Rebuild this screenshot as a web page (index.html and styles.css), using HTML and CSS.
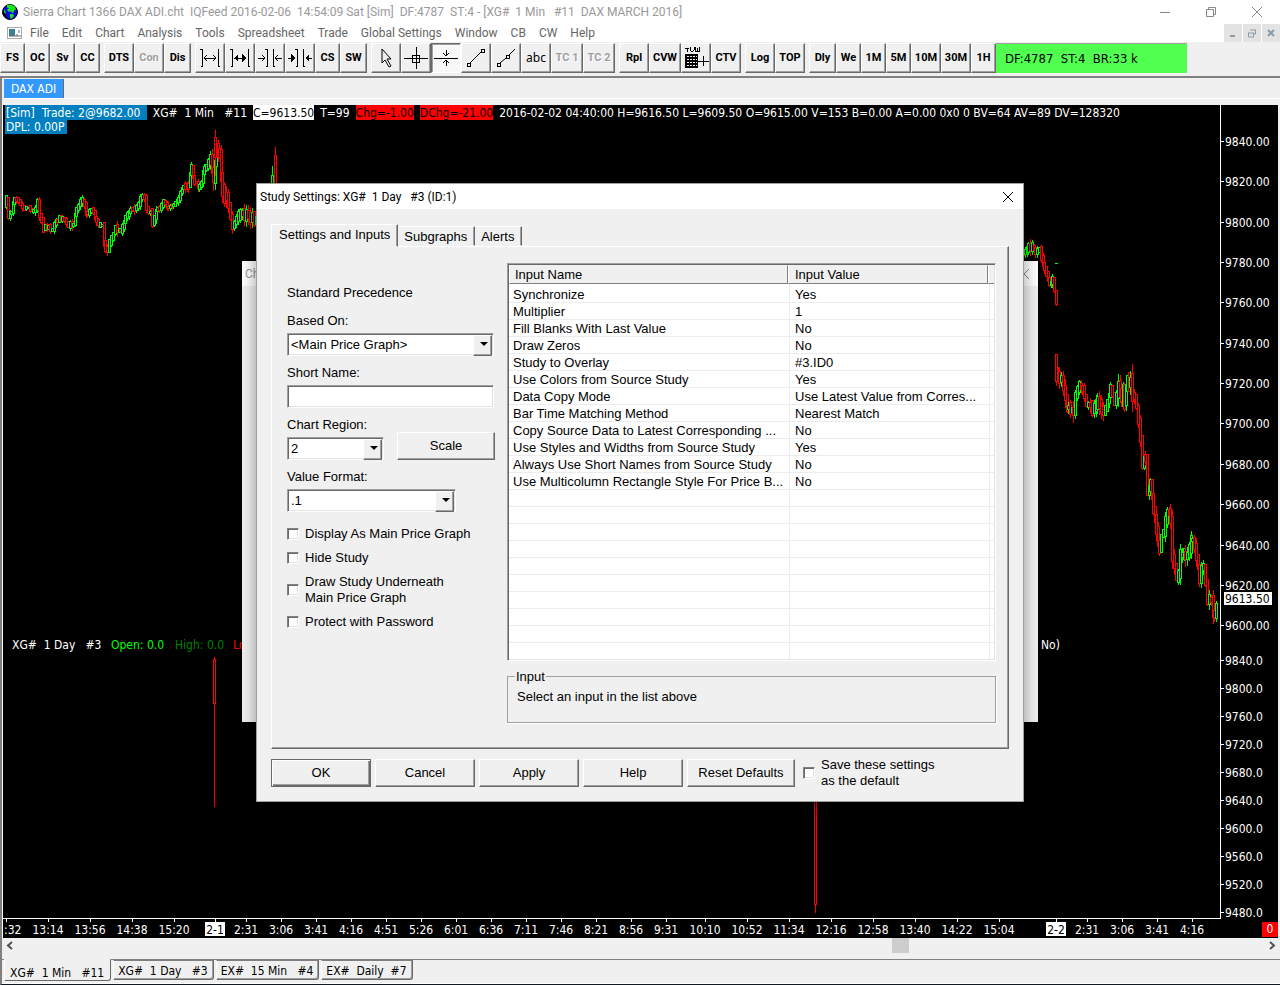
FILE: index.html
```html
<!DOCTYPE html>
<html lang="en">

<head>
  <meta charset="UTF-8">
  <meta name="viewport" content="width=device-width, initial-scale=1.0">
  <title>Sierra Chart</title>
  <link rel="stylesheet" href="styles.css">
</head>

<body>
  <header class="title-bar">
    <svg class="globe" width="16" height="16" viewBox="0 0 16 16">
      <circle cx="8" cy="8" r="7.5" fill="#0a0ae0" stroke="#000" />
      <path d="M5 1l4-.5 4 2 1 3-2 1-1 3-2-2-3 0-1-2 2-1-2-1zM8 10l3 0 1 2-3 3-1-2zM2 5l1 2 1 1-1 2-1-2z" fill="#19e619" />
      <path d="M1 6l2 4 3 4-2 0-3-4z" fill="#000" />
    </svg>
    <h1 class="title-text">Sierra Chart 1366 DAX ADI.cht  IQFeed 2016-02-06  14:54:09 Sat [Sim]  DF:4787  ST:4 - [XG#  1 Min   #11  DAX MARCH 2016]</h1>
    <div class="window-buttons">
      <button aria-label="Minimize"><svg width="12" height="12"><path d="M1 6.5h10" /></svg></button>
      <button aria-label="Restore"><svg width="12" height="12"><path d="M1.5 3.5h7v7h-7zM3.500 3V1.500h7v7H9" /></svg></button>
      <button aria-label="Close"><svg width="12" height="12"><path d="M1 1l10 10M11 1L1 11" /></svg></button>
    </div>
  </header>

  <nav class="menu-bar">
    <svg class="menu-icon" width="15" height="12">
      <rect x=".5" y=".5" width="14" height="11" fill="#fff" stroke="#aaa" />
      <rect x="2" y="2" width="6" height="7" fill="#3d7f8f" />
      <path d="M2 9h12M12 3v3M9 8h2" stroke="#666" fill="none" />
    </svg>
    <a href="#">File</a>
    <a href="#">Edit</a>
    <a href="#">Chart</a>
    <a href="#">Analysis</a>
    <a href="#">Tools</a>
    <a href="#">Spreadsheet</a>
    <a href="#">Trade</a>
    <a href="#">Global Settings</a>
    <a href="#">Window</a>
    <a href="#">CB</a>
    <a href="#">CW</a>
    <a href="#">Help</a>
    <div class="mdi-buttons">
      <button aria-label="Minimize chart"><svg width="10" height="10"><path d="M2 8h5" /></svg></button>
      <button aria-label="Restore chart"><svg width="10" height="10"><path d="M1 5h6M1.500 5v4h5V5M3 2h6M8.500 2v4H7" class="thin" /></svg></button>
      <button aria-label="Close chart"><svg width="10" height="10"><path d="M2 2l6 6M8 2L2 8" /></svg></button>
    </div>
  </nav>

  <div class="toolbar">
    <div class="group">
      <button class="xs">FS</button><button class="xs">OC</button><button class="xs">Sv</button><button class="xs">CC</button>
    </div>
    <div class="group">
      <button>DTS</button><button disabled>Con</button><button class="s">Dis</button>
    </div>
    <div class="group">
      <button aria-label="Widen bars"><svg width="20" height="20"><path d="M0 1h2v17h-1M20 18h-2V1h1M4 10h12M7 7l-3 3 3 3M13 7l3 3-3 3" /></svg></button>
      <button aria-label="Widen bars more"><svg width="20" height="20"><path d="M0 1h2v17h-1M20 18h-2V1h1M4 10h12" /><path class="fill" d="M8 6v8l-4-4zM12 6v8l4-4z" /></svg></button>
      <button aria-label="Narrow bars"><svg width="24" height="20"><path d="M7 1h2v17h-1M17 18h-2V1h1M0 10h7M4 7l3 3-3 3M24 10h-7M20 7l-3 3 3 3" /></svg></button>
      <button aria-label="Narrow bars more"><svg width="24" height="20"><path d="M7 1h2v17h-1M17 18h-2V1h1M0 10h6M24 10h-6" /><path class="fill" d="M3 6v8l4-4zM21 6v8l-4-4z" /></svg></button>
      <button class="xs">CS</button><button class="s">SW</button>
    </div>
    <div class="group">
      <button aria-label="Pointer"><svg width="20" height="20"><path d="M6 1v14l3-3 4 7 2-1-4-7h4z" class="smooth" /></svg></button>
      <button aria-label="Cross"><svg width="24" height="22"><path d="M0 11h24M12 0v22M8 8h7v7H8z" /></svg></button>
      <button class="pressed" aria-label="Hair line"><svg width="24" height="20"><path d="M0 10h24M12 2v6M9 5l3 3 3-3M12 18v-6M9 15l3-3 3 3" /></svg></button>
      <button aria-label="Line"><svg width="20" height="20"><path d="M1 15h3v3H1zM15 1h3v3h-3z" /><path class="smooth" d="M4 15L15 4" /></svg></button>
      <button aria-label="Ray"><svg width="20" height="20"><path d="M1 15h3v3H1zM10 7h3v3h-3z" /><path class="smooth" d="M4 15l6-5M13 7l6-6" /></svg></button>
      <button class="plain">abc</button>
      <button class="l" disabled>TC 1</button><button class="l" disabled>TC 2</button>
    </div>
    <div class="group">
      <button>Rpl</button><button class="l">CVW</button>
      <button aria-label="Trade volume window"><svg width="26" height="24"><path d="M2 2h4M4 2v4M7 1v3l2 2 2-2V1M12 1v4h4V1M14 2v3" /><rect x="2" y="8" width="13" height="14" class="fill" /><path class="grid" d="M4 10h10M4 13h10M4 16h10M4 19h10" stroke-dasharray="2 1" /><path d="M15 15h11M20 10v10" /></svg></button>
      <button>CTV</button>
    </div>
    <div class="group">
      <button>Log</button><button>TOP</button>
    </div>
    <div class="group">
      <button class="s">Dly</button><button class="xs">We</button><button class="xs">1M</button><button class="xs">5M</button><button>10M</button><button>30M</button><button class="xs">1H</button>
      <div class="status">DF:4787  ST:4  BR:33 k</div>
    </div>
  </div>

  <main class="workspace">
    <div class="book-tabs">
      <button class="book-tab">DAX ADI</button>
    </div>

    <div class="chart">
      <div class="chart-body">
        <svg class="plot" id="plot"></svg>
        <svg class="price-axis" id="priceAxis"></svg>
        <div class="chart-info">
          <div class="info-line"><span class="trade">[Sim]  Trade: 2@9682.00 </span><span>XG#  1 Min   #11</span><span class="close">C=9613.50</span><span>T=99</span><span class="down">Chg=-1.00</span><span class="down">DChg=-21.00</span><span>2016-02-02 04:40:00 H=9616.50 L=9609.50 O=9615.00 V=153 B=0.00 A=0.00 0x0 0 BV=64 AV=89 DV=128320</span></div>
          <div class="info-line"><span class="trade">DPL: 0.00P</span></div>
        </div>
      </div>
      <div class="time-row">
        <svg class="time-axis" id="timeAxis"></svg>
        <span class="zero">0</span>
      </div>
    </div>

    <div class="scroll-bar">
      <button aria-label="Scroll left"><svg width="7" height="9"><path d="M6 1L2 4.500 6 8" /></svg></button>
      <div class="track"><div class="thumb"></div></div>
      <button aria-label="Scroll right"><svg width="7" height="9"><path d="M1 1l4 3.500L1 8" /></svg></button>
    </div>

    <div class="chart-tabs">
      <button class="chart-tab active">XG#  1 Min   #11</button>
      <button class="chart-tab">XG#  1 Day   #3</button>
      <button class="chart-tab">EX#  15 Min   #4</button>
      <button class="chart-tab">EX#  Daily  #7</button>
    </div>
  </main>

  <div class="back-window">
    <div class="back-title"><span>Ch</span><svg width="12" height="12"><path d="M1 1l10 10M11 1L1 11" /></svg></div>
  </div>

  <form class="dialog">
    <div class="dialog-title">
      <h2>Study Settings: XG#  1 Day   #3 (ID:1)</h2>
      <button type="button" class="dialog-close" aria-label="Close"><svg width="12" height="12"><path d="M1 1l10 10M11 1L1 11" /></svg></button>
    </div>

    <div class="dialog-body">
      <div class="tabs">
        <button type="button" class="tab active">Settings and Inputs</button>
        <button type="button" class="tab">Subgraphs</button>
        <button type="button" class="tab">Alerts</button>
      </div>

      <div class="pane">
        <div class="settings">
          <p class="precedence">Standard Precedence</p>
          <div class="field">
            <label for="based">Based On:</label>
            <div class="combo"><select id="based"><option>&lt;Main Price Graph&gt;</option></select></div>
          </div>
          <div class="field">
            <label for="short">Short Name:</label>
            <input type="text" id="short">
          </div>
          <div class="field-row">
            <div class="field region">
              <label for="region">Chart Region:</label>
              <div class="combo"><select id="region"><option>2</option></select></div>
            </div>
            <button type="button" class="push">Scale</button>
          </div>
          <div class="field format">
            <label for="format">Value Format:</label>
            <div class="combo"><select id="format"><option>.1</option></select></div>
          </div>
          <div class="checks">
            <label class="check"><input type="checkbox"><span>Display As Main Price Graph</span></label>
            <label class="check"><input type="checkbox"><span>Hide Study</span></label>
            <label class="check"><input type="checkbox"><span>Draw Study Underneath<br>Main Price Graph</span></label>
            <label class="check"><input type="checkbox"><span>Protect with Password</span></label>
          </div>
        </div>

        <div class="inputs">
          <div class="list">
            <table>
              <colgroup><col class="name-col"><col><col class="end-col"></colgroup>
              <thead>
                <tr><th>Input Name</th><th>Input Value</th><th></th></tr>
              </thead>
              <tbody>
                <tr><td>Synchronize</td><td>Yes</td></tr>
                <tr><td>Multiplier</td><td>1</td></tr>
                <tr><td>Fill Blanks With Last Value</td><td>No</td></tr>
                <tr><td>Draw Zeros</td><td>No</td></tr>
                <tr><td>Study to Overlay</td><td>#3.ID0</td></tr>
                <tr><td>Use Colors from Source Study</td><td>Yes</td></tr>
                <tr><td>Data Copy Mode</td><td>Use Latest Value from Corres...</td></tr>
                <tr><td>Bar Time Matching Method</td><td>Nearest Match</td></tr>
                <tr><td>Copy Source Data to Latest Corresponding ...</td><td>No</td></tr>
                <tr><td>Use Styles and Widths from Source Study</td><td>Yes</td></tr>
                <tr><td>Always Use Short Names from Source Study</td><td>No</td></tr>
                <tr><td>Use Multicolumn Rectangle Style For Price B...</td><td>No</td></tr>
              </tbody>
            </table>
          </div>
          <fieldset>
            <legend>Input</legend>
            Select an input in the list above
          </fieldset>
        </div>
      </div>

      <div class="actions">
        <button type="button" class="push default">OK</button>
        <button type="button" class="push">Cancel</button>
        <button type="button" class="push">Apply</button>
        <button type="button" class="push">Help</button>
        <button type="button" class="push wide">Reset Defaults</button>
        <label class="check"><input type="checkbox"><span>Save these settings<br>as the default</span></label>
      </div>
    </div>
  </form>

  <script src="chart.js"></script>
</body>

</html>
```
FILE: styles.css
```css
* {
  box-sizing: border-box;
  margin: 0;
  padding: 0;
}

body {
  height: 100vh;
  display: flex;
  flex-direction: column;
  overflow: hidden;
  position: relative;
  background: #f0f0f0;
  font-family: "Liberation Sans", Arial, sans-serif;
  font-size: 13px;
  color: #000;
}

button,
input,
select {
  font: inherit;
  color: inherit;
  border-radius: 0;
}

svg {
  display: block;
  flex: none;
}

/* title bar and menu */
.title-bar {
  height: 23px;
  display: flex;
  align-items: center;
  background: #fff;
  padding-left: 2px;
}

.title-text {
  flex: 1;
  padding-left: 5px;
  font: 12px/22px Roboto, "Segoe UI", sans-serif;
  color: #999;
  white-space: pre;
}

.window-buttons {
  display: flex;
}

.window-buttons button {
  width: 46px;
  height: 20px;
  display: flex;
  justify-content: center;
  align-items: center;
  border: none;
  background: none;
}

.window-buttons path {
  fill: none;
  stroke: #888;
}

.menu-bar {
  height: 19px;
  display: flex;
  align-items: center;
  gap: 13px;
  padding-left: 7px;
  background: #fff;
  font: 12px/19px Roboto, "Segoe UI", sans-serif;
}

.menu-icon {
  margin-right: -5px;
}

.menu-bar a {
  padding-top: 1px;
  color: #666;
  text-decoration: none;
}

.mdi-buttons {
  display: flex;
  gap: 1px;
  margin-left: auto;
}

.mdi-buttons button {
  width: 18px;
  height: 18px;
  display: flex;
  justify-content: center;
  align-items: center;
  border: none;
  background: #e3e3e3;
}

.mdi-buttons path {
  fill: none;
  stroke: #8a9baa;
  stroke-width: 2;
}

.mdi-buttons .thin {
  stroke-width: 1;
}

/* toolbar */
.toolbar {
  height: 34px;
  display: flex;
  gap: 4px;
  padding: 1px 0 3px;
}

.group {
  display: flex;
}

.toolbar button {
  width: 30px;
  height: 30px;
  display: flex;
  justify-content: center;
  align-items: center;
  border: 1px solid;
  border-color: #fff #696969 #696969 #fff;
  box-shadow: inset -1px -1px #a0a0a0;
  background: #f0f0f0;
  font: bold 11px/26px Roboto, "Arial Narrow", sans-serif;
  white-space: nowrap;
}

.toolbar .xs {
  width: 25px;
}

.toolbar .s {
  width: 27px;
}

.toolbar .l {
  width: 32px;
}

.toolbar .plain {
  font: 12px/26px "Noto Sans", sans-serif;
}

.toolbar button:disabled {
  color: #a0a0a0;
  text-shadow: 1px 1px #fff;
}

.toolbar .pressed {
  background: #f8f8f8;
  border-color: #696969 #fff #fff #696969;
  box-shadow: inset 1px 1px #a0a0a0;
}

.toolbar path {
  fill: none;
  stroke: #000;
  shape-rendering: crispEdges;
}

.toolbar .smooth {
  shape-rendering: auto;
}

.toolbar .fill {
  fill: #000;
  stroke: none;
}

.toolbar .grid {
  stroke: #f0f0f0;
}

.status {
  width: 191px;
  height: 30px;
  padding-left: 9px;
  border-top: 1px solid #a0a0a0;
  background: #50ff50;
  font: 13px/30px "DejaVu Sans Condensed", Tahoma, sans-serif;
  white-space: pre;
}

/* workspace */
.workspace {
  flex: 1;
  display: flex;
  flex-direction: column;
  border-top: 2px solid #808080;
  border-left: 2px solid #808080;
  border-bottom: 1px solid #101820;
  font-family: "DejaVu Sans Condensed", Tahoma, sans-serif;
  font-size: 12px;
}

.book-tabs {
  height: 21px;
  display: flex;
  padding: 1px 0 0 2px;
  border-bottom: 1px solid #fff;
}

.book-tab {
  padding: 0 7px;
  border: none;
  border-right: 1px solid #696969;
  background: #3399ff;
  color: #fff;
}

.chart {
  flex: 1;
  display: flex;
  flex-direction: column;
  margin-top: 6px;
  border-left: 1px solid #fff;
  border-right: 2px solid #f0f0f0;
  background: #000;
  color: #fff;
}

.chart-body {
  flex: 1;
  display: flex;
  position: relative;
}

.plot {
  flex: 1;
  min-width: 0;
  height: 100%;
  border-right: 1px solid #fff;
  border-bottom: 1px solid #fff;
}

.price-axis {
  width: 57px;
  height: 100%;
}

.plot text,
.price-axis text,
.time-axis text {
  fill: #fff;
  white-space: pre;
}

.plot path,
.plot rect,
.price-axis path,
.time-axis path {
  shape-rendering: crispEdges;
}

.price-axis path,
.time-axis path {
  stroke: #fff;
}

.price-axis .mark,
.time-axis .mark {
  fill: #fff;
}

.price-axis .mark-text,
.time-axis .mark-text {
  fill: #000;
}

.plot .up {
  fill: #000;
  stroke: #00ff00;
}

.plot .dn {
  fill: #000;
  stroke: #ff0000;
}

.plot .open {
  fill: #00ff00;
}

.plot .high {
  fill: #008000;
}

.plot .low {
  fill: #ff0000;
}

.chart-info {
  position: absolute;
  top: 0;
  left: 2px;
}

.info-line {
  display: flex;
  gap: 6px;
  line-height: 14px;
  white-space: pre;
}

.info-line span {
  padding-top: 1px;
  margin-bottom: -1px;
}

.info-line .trade {
  padding: 1px 3px 0 1px;
  background: #0080c0;
}

.close {
  background: #fff;
  color: #000;
}

.down {
  background: #ff0000;
  color: #000;
}

.time-row {
  height: 19px;
  display: flex;
}

.time-axis {
  flex: 1;
  min-width: 0;
  height: 19px;
}

.zero {
  width: 16px;
  height: 15px;
  margin-top: 3px;
  background: #ff0000;
  line-height: 15px;
  text-align: center;
}

.scroll-bar {
  height: 22px;
  display: flex;
  align-items: center;
  padding: 0 4px 6px;
  border-bottom: 1px solid #808080;
}

.scroll-bar button {
  border: none;
  background: none;
}

.scroll-bar path {
  fill: none;
  stroke: #505050;
  stroke-width: 2;
}

.track {
  flex: 1;
  height: 15px;
}

.thumb {
  width: 17px;
  height: 15px;
  margin-left: 70%;
  background: #cdcdcd;
}

.chart-tabs {
  height: 24px;
  display: flex;
  align-items: flex-start;
  gap: 2px;
  padding-left: 2px;
  border-bottom: 1px solid #fff;
}

.chart-tab {
  height: 20px;
  padding: 2px 5px 0 4px;
  border: 1px solid;
  border-color: #808080 #696969 #696969 #fff;
  border-bottom-right-radius: 3px;
  background: #f0f0f0;
  box-shadow: inset -1px -1px #a0a0a0;
  line-height: 17px;
  white-space: pre;
}

.chart-tab.active {
  height: 22px;
  margin-top: -1px;
  padding: 5px 6px 0 5px;
  border-color: #f0f0f0 #696969 #696969 #fff;
  box-shadow: none;
}

/* window left open behind the dialog */
.back-window {
  position: absolute;
  top: 261px;
  left: calc(50% - 398px);
  width: 796px;
  height: 461px;
  background: #f0f0f0;
}

.back-title {
  height: 25px;
  display: flex;
  justify-content: space-between;
  align-items: center;
  padding: 0 8px 0 3px;
  background: #fff;
  color: #999;
  font: 12px Roboto, "Segoe UI", sans-serif;
}

.back-title path {
  fill: none;
  stroke: #888;
}

/* dialog */
.dialog {
  position: absolute;
  top: 183px;
  left: calc(50% - 384px);
  width: 768px;
  border: 1px solid #a0a0a0;
  background: #f0f0f0;
  box-shadow: 0 4px 16px rgba(0, 0, 0, 0.4);
  line-height: 16px;
}

.dialog-title {
  height: 25px;
  display: flex;
  justify-content: space-between;
  align-items: center;
  padding: 0 9px 0 3px;
  background: #fff;
}

.dialog-title h2 {
  font: 12px/24px Roboto, "Segoe UI", sans-serif;
  white-space: pre;
}

.dialog-close {
  border: none;
  background: none;
}

.dialog-close path {
  fill: none;
  stroke: #000;
}

.dialog-body {
  padding: 15px 14px 12px;
}

.tabs {
  height: 22px;
  display: flex;
  align-items: flex-end;
}

.tab {
  height: 20px;
  padding: 1px 7px 0 5px;
  border: 1px solid;
  border-color: #fff #696969 transparent transparent;
  box-shadow: inset -1px 0 #a0a0a0;
  background: #f0f0f0;
}

.tab.active {
  height: 23px;
  margin-bottom: -1px;
  padding: 0 7px 2px;
  border-left-color: #fff;
  z-index: 1;
}

.pane {
  display: flex;
  gap: 12px;
  padding: 16px 12px 25px 15px;
  border: 1px solid;
  border-color: #fff #696969 #696969 #fff;
  box-shadow: inset -1px -1px #a0a0a0;
}

.settings {
  width: 208px;
  padding-top: 22px;
}

.precedence {
  margin-bottom: 12px;
}

.field {
  display: flex;
  flex-direction: column;
  gap: 4px;
  width: 207px;
  margin-bottom: 9px;
}

.field-row {
  display: flex;
  justify-content: space-between;
  align-items: flex-end;
}

.field-row .push {
  width: 98px;
  margin-bottom: 9px;
}

.region {
  width: 97px;
}

.format {
  width: 169px;
}

.combo {
  position: relative;
}

.combo select,
.field input {
  display: block;
  width: 100%;
  height: 23px;
  padding: 1px 3px 0;
  appearance: none;
  border: 1px solid;
  border-color: #a0a0a0 #fff #fff #a0a0a0;
  box-shadow: inset 1px 1px #696969, inset -1px -1px #e3e3e3;
  background: #fff;
}

.combo::before {
  content: "";
  position: absolute;
  top: 2px;
  right: 2px;
  width: 17px;
  height: 19px;
  border: 1px solid;
  border-color: #fff #696969 #696969 #fff;
  box-shadow: inset -1px -1px #a0a0a0;
  background: #f0f0f0;
  pointer-events: none;
}

.combo::after {
  content: "";
  position: absolute;
  top: 9px;
  right: 6px;
  border: 4px solid transparent;
  border-top-color: #000;
  border-bottom: none;
  pointer-events: none;
}

.checks {
  display: flex;
  flex-direction: column;
  gap: 8px;
  padding-top: 5px;
}

.check {
  display: flex;
  align-items: center;
  gap: 6px;
}

.check input {
  flex: none;
  width: 12px;
  height: 12px;
  appearance: none;
  border: 1px solid;
  border-color: #808080 #fff #fff #808080;
  box-shadow: inset 1px 1px #696969, inset -1px -1px #e3e3e3;
  background: #fff;
}

.inputs {
  flex: 1;
}

.list {
  height: 398px;
  border: 1px solid;
  border-color: #a0a0a0 #fff #fff #a0a0a0;
  box-shadow: inset 1px 1px #696969, inset -1px -1px #e3e3e3;
  padding: 1px;
  background:
    linear-gradient(#ececec, #ececec) 281px 0 / 1px 100% no-repeat,
    linear-gradient(#ececec, #ececec) 481px 0 / 1px 100% no-repeat,
    repeating-linear-gradient(transparent 0 16px, #ececec 16px 17px) 0 22px no-repeat,
    #fff;
}

table {
  width: 100%;
  table-layout: fixed;
  border-collapse: separate;
  border-spacing: 0;
}

.name-col {
  width: 279px;
}

.end-col {
  width: 6px;
}

th {
  height: 19px;
  padding-left: 6px;
  border: 1px solid;
  border-color: #f0f0f0 #808080 #808080 #fff;
  background: #f0f0f0;
  font-weight: normal;
  line-height: 17px;
  text-align: left;
}

th:first-child {
  padding-left: 5px;
}

th:last-child {
  border-right: none;
}

tbody::before {
  content: "";
  display: block;
  height: 2px;
}

td {
  height: 17px;
  padding-left: 4px;
  line-height: 17px;
  white-space: nowrap;
}

td + td {
  padding-left: 7px;
}

fieldset {
  height: 55px;
  margin-top: 7px;
  padding: 4px 9px;
  border: 1px solid #a0a0a0;
  box-shadow: 1px 1px #fff;
}

legend {
  margin-left: -2px;
  padding: 1px 1px 0;
}

.push {
  width: 100px;
  height: 28px;
  border: 1px solid;
  border-color: #fff #696969 #696969 #fff;
  box-shadow: inset -1px -1px #a0a0a0;
  background: #f0f0f0;
}

.push.default {
  border-color: #696969;
  box-shadow: inset 1px 1px #fff, inset -1px -1px #696969, inset -2px -2px #a0a0a0;
}

.push.wide {
  width: 108px;
}

.actions {
  display: flex;
  align-items: center;
  gap: 4px;
  padding-top: 8px;
}

.actions .check {
  margin-left: 4px;
}
```
FILE: chart.js
```js
const NS = 'http://www.w3.org/2000/svg';
const plot = document.getElementById('plot');
const priceAxis = document.getElementById('priceAxis');
const timeAxis = document.getElementById('timeAxis');

function add(parent, tag, attrs, text) {
  const el = document.createElementNS(NS, tag);
  for (const key in attrs) {
    el.setAttribute(key, attrs[key]);
  }
  if (text) {
    el.textContent = text;
  }
  parent.appendChild(el);
  return el;
}

// half pixel shift keeps the 1px strokes sharp
const bars = add(plot, 'g', { transform: 'translate(0.5 0.5)' });

// every run is a list of [x, middle, half range]
const runs = [
  [[3, 98, 8], [5, 110, 6], [8, 105, 6], [11, 92, 4], [15, 93, 5], [19, 102, 5], [25, 101, 4], [30, 107, 4], [34, 95, 6],
   [36, 107, 8], [40, 122, 6], [45, 121, 4], [49, 124, 5], [54, 113, 6], [59, 114, 4], [65, 121, 5], [70, 118, 4], [73, 102, 5],
   [79, 94, 6], [84, 108, 6], [88, 103, 5], [93, 114, 5], [99, 122, 5], [102, 145, 8], [106, 137, 8], [112, 123, 6], [117, 126, 7],
   [122, 112, 5], [127, 104, 5], [133, 102, 5], [139, 88, 6], [143, 99, 8], [149, 116, 8], [154, 101, 7], [160, 98, 5],
   [165, 101, 4], [170, 99, 3], [175, 92, 5], [180, 83, 6], [185, 79, 7], [188, 60, 8], [191, 78, 10], [196, 81, 5],
   [201, 65, 6], [207, 50, 8], [210, 69, 16], [213, 48, 12], [216, 45, 10], [219, 86, 20], [223, 90, 12], [229, 122, 8],
   [233, 116, 12], [239, 111, 11], [245, 108, 11], [251, 115, 10], [256, 103, 10]],
  [[1020, 146, 8], [1025, 140, 8], [1029, 139, 8], [1032, 150, 7], [1036, 145, 9], [1041, 163, 5], [1046, 178, 6],
   [1049, 175, 5], [1053, 190, 6]],
  [[1054, 265, 12], [1058, 276, 10], [1062, 292, 12], [1065, 305, 10], [1070, 303, 12], [1074, 284, 8], [1079, 280, 8],
   [1083, 303, 10], [1089, 303, 12], [1094, 297, 10], [1100, 307, 10], [1104, 295, 8], [1107, 282, 6], [1111, 300, 6],
   [1115, 281, 16], [1118, 300, 20], [1121, 288, 24], [1124, 275, 16], [1127, 280, 16], [1131, 295, 18], [1135, 314, 9],
   [1137, 335, 10], [1139, 359, 6], [1142, 350, 9], [1144, 384, 8], [1147, 378, 8], [1150, 405, 12], [1153, 422, 12],
   [1156, 443, 8], [1160, 424, 12], [1164, 404, 8], [1167, 414, 12], [1169, 450, 14], [1173, 478, 8], [1177, 454, 12],
   [1182, 448, 12], [1186, 446, 12], [1189, 431, 8], [1193, 452, 12], [1196, 472, 8], [1200, 460, 8], [1204, 490, 14],
   [1208, 499, 12], [1211, 508, 10], [1214, 495, 8]]
];

// small repeatable noise so the bars look the same on every load
let seed = 7;
function noise() {
  seed = (seed * 16807) % 2147483647;
  return seed / 2147483647 - 0.5;
}

function bar(x, high, low, top, bottom, up) {
  const cls = up ? 'up' : 'dn';
  add(bars, 'path', { class: cls, d: `M${x} ${high}V${top}M${x} ${bottom}V${low}` });
  add(bars, 'rect', { class: cls, x: x - 1, y: top, width: 2, height: Math.max(bottom - top, 1) });
}

// each body reaches back to the bar before it, so steep moves stay connected
runs.forEach((run) => {
  let last = run[0][1];
  for (let i = 0; i < run.length - 1; i++) {
    const [x1, y1, r1] = run[i];
    const [x2, y2, r2] = run[i + 1];
    for (let x = x1; x < x2; x += 2) {
      const t = (x - x1) / (x2 - x1);
      const range = r1 + (r2 - r1) * t;
      const mid = Math.round(y1 + (y2 - y1) * t + noise() * range * 0.9);
      const half = Math.round(range * (0.3 + noise() * 0.4));
      const top = Math.min(last, mid) - half;
      const bottom = Math.max(last, mid) + half;
      const wick = Math.round(range * (0.3 + noise() * 0.6));
      bar(x, top - wick, bottom + wick, top, bottom, mid + noise() * 4 < last);
      last = mid;
    }
  }
});

bar(212, 24, 70, 32, 52, false);
bar(269, 60, 100, 70, 100, true);
bar(272, 41, 100, 50, 100, false);
bar(1053, 185, 200, 185, 199, false);
bar(1053, 248, 280, 249, 276, false);
bar(211, 551, 701, 554, 598, false);
bar(812, 600, 807, 600, 799, false);
add(bars, 'path', { class: 'up', d: 'M1051 158h3' });

add(plot, 'text', { x: 9, y: 544 }, 'XG#  1 Day   #3');
add(plot, 'text', { x: 108, y: 544, class: 'open' }, 'Open: 0.0');
add(plot, 'text', { x: 172, y: 544, class: 'high' }, 'High: 0.0');
add(plot, 'text', { x: 230, y: 544, class: 'low' }, 'Low: 0.0');
add(plot, 'text', { x: 1038, y: 544 }, 'No)');

function priceLabel(y, text) {
  add(priceAxis, 'path', { d: `M0 ${y}h3` });
  add(priceAxis, 'text', { x: 4, y: y + 5 }, text);
}

for (let i = 0; i < 13; i++) {
  priceLabel(Math.round(36 + i * 40.35), (9840 - i * 20).toFixed(2));
}
for (let i = 0; i < 10; i++) {
  priceLabel(555 + i * 28, (9840 - i * 40).toFixed(1));
}
add(priceAxis, 'rect', { class: 'mark', x: 3, y: 487, width: 48, height: 13 });
add(priceAxis, 'text', { class: 'mark-text', x: 4, y: 498 }, '9613.50');

const times = [
  [45, '13:14'], [87, '13:56'], [129, '14:38'], [171, '15:20'], [212, '2-1'], [243, '2:31'], [278, '3:06'],
  [313, '3:41'], [348, '4:16'], [383, '4:51'], [418, '5:26'], [453, '6:01'], [488, '6:36'], [523, '7:11'], [558, '7:46'],
  [593, '8:21'], [628, '8:56'], [663, '9:31'], [702, '10:10'], [744, '10:52'], [786, '11:34'], [828, '12:16'],
  [870, '12:58'], [912, '13:40'], [954, '14:22'], [996, '15:04'], [1053, '2-2'], [1084, '2:31'], [1119, '3:06'],
  [1154, '3:41'], [1189, '4:16']
];

// the first label has scrolled off, only its minutes are left
add(timeAxis, 'path', { d: 'M3 0v3' });
add(timeAxis, 'text', { x: 1, y: 15 }, ':32');

times.forEach(([x, label]) => {
  const isDay = label.includes('-');
  add(timeAxis, 'path', { d: `M${x} 0v3` });
  if (isDay) {
    add(timeAxis, 'rect', { class: 'mark', x: x - 10, y: 3, width: 20, height: 14 });
  }
  add(timeAxis, 'text', { x, y: 15, 'text-anchor': 'middle', class: isDay ? 'mark-text' : '' }, label);
});
```
